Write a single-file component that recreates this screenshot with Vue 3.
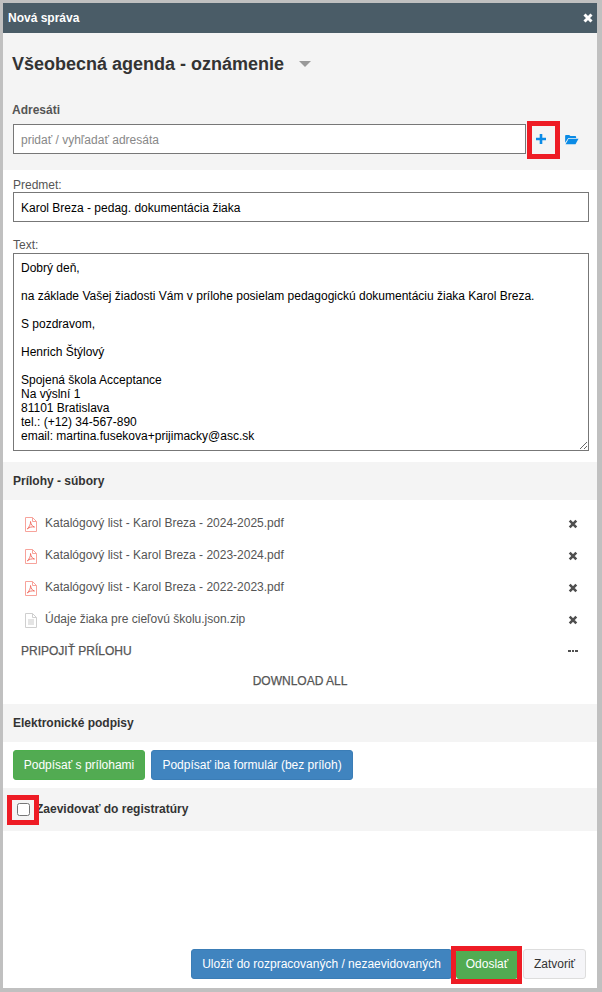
<script setup>
const files = [
  { name: 'Katalógový list - Karol Breza - 2024-2025.pdf', pdf: true },
  { name: 'Katalógový list - Karol Breza - 2023-2024.pdf', pdf: true },
  { name: 'Katalógový list - Karol Breza - 2022-2023.pdf', pdf: true },
  { name: 'Údaje žiaka pre cieľovú školu.json.zip', pdf: false }
]
const body = `Dobrý deň,

na základe Vašej žiadosti Vám v prílohe posielam pedagogickú dokumentáciu žiaka Karol Breza.

S pozdravom,

Henrich Štýlový

Spojená škola Acceptance
Na výslní 1
81101 Bratislava
tel.: (+12) 34-567-890
email: martina.fusekova+prijimacky@asc.sk`
</script>

<template>
  <div class="frame">
    <div class="modal">
      <header class="bar">
        <span class="bar-title">Nová správa</span>
        <svg class="bar-x" width="10" height="10" viewBox="0 0 10 10"><path d="M1.500 1.500l7 7M8.500 1.500l-7 7" stroke="#fff" stroke-width="3" /></svg>
      </header>

      <section class="top">
        <div class="heading">
          <span>Všeobecná agenda - oznámenie</span>
          <i class="caret"></i>
        </div>
        <div class="adr-label">Adresáti</div>
        <div class="adr-row">
          <input class="field adr-input" placeholder="pridať / vyhľadať adresáta" />
          <span class="adr-icon plus">
            <svg width="10" height="10" viewBox="0 0 10 10"><path d="M5 0v10M0 5h10" stroke="#0a8be6" stroke-width="2.600" /></svg>
            <b class="mark mark-plus"></b>
          </span>
          <span class="adr-icon folder">
            <svg width="14" height="11" viewBox="0 0 15 12"><path d="M0 2a1 1 0 0 1 1-1h3.500l1.200 1.300H11a1 1 0 0 1 1 1V4.300H3.500L0 9.500z" fill="#0a8be6" /><path d="M3.800 5.200H14.600L11.300 11.200H.5z" fill="#0a8be6" /></svg>
          </span>
        </div>
      </section>

      <section class="form">
        <label class="lbl">Predmet:</label>
        <input class="field subject" value="Karol Breza - pedag. dokumentácia žiaka" />
        <label class="lbl lbl-text">Text:</label>
        <textarea class="field area" :value="body" spellcheck="false"></textarea>
      </section>

      <div class="band band-files">Prílohy - súbory</div>

      <section class="files">
        <div v-for="f in files" :key="f.name" class="file">
          <svg class="file-ico" width="12" height="15" viewBox="0 0 12 15">
            <path d="M.5.500H7.500L11.500 4.500V14.500H.5z" fill="#fff" :stroke="f.pdf ? '#f7a39b' : '#cfcfcf'" />
            <path d="M7.500.500V4.500H11.500" fill="none" :stroke="f.pdf ? '#f7a39b' : '#cfcfcf'" />
            <path v-if="f.pdf" d="M5.500 4.500c.3 2.500-1 5-3.200 7.500 2-1.800 4.500-2.500 7.200-2-2.200-.5-3.600-2.800-4-5.500z" fill="none" stroke="#f0695e" stroke-width=".9" />
            <path v-else d="M3 7h6M3 9h6M3 11h6" stroke="#c9c9c9" />
          </svg>
          <span class="file-name">{{ f.name }}</span>
          <svg class="file-x" width="10" height="10" viewBox="0 0 10 10"><path d="M1.700 1.700l6.600 6.600M8.300 1.700L1.700 8.300" stroke="#4f4f4f" stroke-width="2.600" /></svg>
        </div>
        <div class="attach">
          <span class="strong">PRIPOJIŤ PRÍLOHU</span>
          <span class="dots"><i></i><i></i><i></i></span>
        </div>
        <div class="download strong">DOWNLOAD ALL</div>
      </section>

      <div class="band band-sign">Elektronické podpisy</div>

      <section class="sign">
        <button class="btn green">Podpísať s prílohami</button>
        <button class="btn blue">Podpísať iba formulár (bez príloh)</button>
      </section>

      <div class="band band-reg">
        <span class="check"></span>
        <span class="reg-text">Zaevidovať do registratúry</span>
        <b class="mark mark-check"></b>
      </div>

      <footer class="foot">
        <button class="btn blue save">Uložiť do rozpracovaných / nezaevidovaných</button>
        <span class="send-wrap">
          <button class="btn green send">Odoslať</button>
          <b class="mark mark-send"></b>
        </span>
        <button class="btn plain">Zatvoriť</button>
      </footer>
    </div>
  </div>
</template>

<style>
html, body { margin: 0; padding: 0; background: #c0c0c0; }
</style>

<style scoped>
.frame {
  width: 602px;
  height: 992px;
  box-sizing: border-box;
  padding: 3px 5px 4px 3px;
  background: #c0c0c0;
  font-family: "Liberation Sans", Arial, sans-serif;
}
.modal {
  height: 100%;
  background: #fff;
  display: flex;
  flex-direction: column;
}
.bar {
  height: 30px;
  flex: none;
  background: #4a5c67;
  display: flex;
  align-items: center;
  justify-content: space-between;
  padding: 0 4px 0 5px;
  color: #fff;
}
.bar-title { font-size: 12px; font-weight: 700; }
.top {
  height: 137px;
  flex: none;
  box-sizing: border-box;
  background: #f4f4f4;
  padding: 20px 10px 0 9px;
}
.heading {
  display: flex;
  align-items: center;
  font-size: 18px;
  font-weight: 700;
  color: #333;
  line-height: 22px;
}
.caret {
  margin-left: 15px;
  margin-top: 0;
  width: 0;
  height: 0;
  border-left: 6px solid transparent;
  border-right: 6px solid transparent;
  border-top: 6px solid #999;
}
.adr-label {
  margin-top: 28px;
  font-size: 12px;
  font-weight: 700;
  color: #555;
  line-height: 14px;
}
.adr-row {
  margin-top: 7px;
  margin-left: 1px;
  display: flex;
  align-items: center;
}
.field {
  display: block;
  box-sizing: border-box;
  border: 1px solid #777;
  background: #fff;
  font-family: "Liberation Sans", Arial, sans-serif;
  font-size: 12px;
  color: #000;
  padding: 0 7px;
  outline: none;
  margin: 0;
  border-radius: 0;
}
.adr-input { width: 513px; height: 30px; padding-top: 2px; }
.adr-input::placeholder { color: #888; opacity: 1; }
.adr-icon { display: flex; align-items: center; justify-content: center; position: relative; }
.plus { width: 33px; height: 30px; box-sizing: border-box; padding-right: 3px; }
.folder { width: 14px; height: 30px; margin-left: 6px; }
.mark {
  position: absolute;
  box-sizing: border-box;
  border: 5px solid #ee1c25;
  display: block;
  pointer-events: none;
}
.mark-plus { left: 1px; top: -3px; width: 33px; height: 38px; }
.form { padding: 8px 10px 0; flex: none; height: 292px; box-sizing: border-box; }
.lbl { display: block; font-size: 12px; color: #555; line-height: 14px; }
.lbl-text { margin-top: 16px; }
.subject { width: 576px; height: 30px; margin-top: 0; padding-top: 2px; }
.area {
  width: 576px;
  height: 198px;
  margin-top: 1px;
  padding: 7px;
  line-height: 14px;
  resize: both;
  overflow: hidden;
}
.band {
  flex: none;
  background: #f4f4f4;
  box-sizing: border-box;
  display: flex;
  align-items: center;
  padding: 0 10px;
  font-size: 12px;
  font-weight: 700;
  color: #333;
}
.band-files, .band-sign { height: 38px; }
.files { flex: none; height: 204px; box-sizing: border-box; padding: 7px 18px 0; color: #555; font-size: 12px; }
.file { display: flex; align-items: center; height: 32px; }
.file-ico { margin-left: 4px; margin-right: 8px; flex: none; margin-top: 2px; }
.file-name { flex: 1; margin-top: -1px; }
.file-x { margin-right: 1px; margin-top: 2px; flex: none; }
.attach {
  display: flex;
  justify-content: space-between;
  align-items: center;
  height: 30px;
  margin-top: 1px;
}
.strong { -webkit-text-stroke: 0.25px #555; }
.dots { display: flex; gap: 1px; margin-right: 1px; }
.dots i { width: 2.600px; height: 2.600px; background: #4f4f4f; }
.download { text-align: center; line-height: 30px; margin-left: -18px; margin-right: -18px; }
.sign { flex: none; height: 46px; box-sizing: border-box; padding: 8px 10px 0; display: flex; gap: 6px; }
.btn {
  height: 30px;
  box-sizing: border-box;
  border: 1px solid transparent;
  border-radius: 3px;
  font-family: "Liberation Sans", Arial, sans-serif;
  font-size: 12px;
  padding: 0;
  margin: 0;
  color: #fff;
  white-space: nowrap;
}
.green { background: #52ab52; border-color: #4cae4c; }
.blue { background: #4084bf; border-color: #3b7db6; }
.sign .green { width: 132px; }
.sign .blue { width: 202px; }
.band-reg { height: 43px; position: relative; padding: 0; }
.check {
  position: absolute;
  left: 14px;
  top: 15px;
  width: 13px;
  height: 13px;
  box-sizing: border-box;
  border: 1px solid #767676;
  border-radius: 2.500px;
  background: #fff;
}
.reg-text { margin-left: 33px; margin-top: -1px; }
.mark-check { left: 4px; top: 7px; width: 32px; height: 30px; }
.foot {
  margin-top: auto;
  height: 39px;
  flex: none;
  box-sizing: border-box;
  padding: 0 11px 9px 0;
  display: flex;
  justify-content: flex-end;
  align-items: flex-end;
}
.save { width: 261px; }
.send-wrap { position: relative; margin-left: 4px; display: block; height: 30px; }
.send { width: 62px; display: block; }
.mark-send { left: -5px; top: -3px; width: 71px; height: 38px; }
.plain {
  width: 63px;
  margin-left: 5px;
  background: #f5f5f8;
  border-color: #ddd;
  color: #333;
}
</style>
